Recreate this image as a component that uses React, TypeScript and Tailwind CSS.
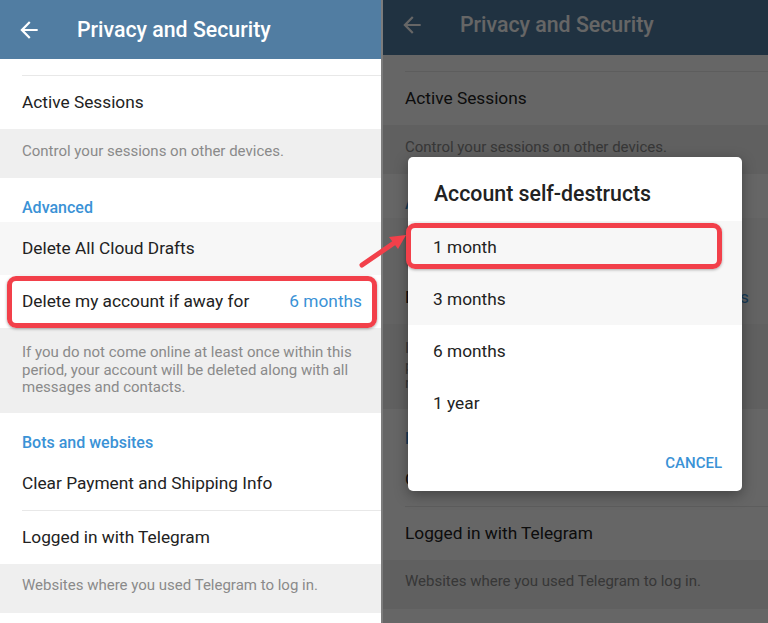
import React from 'react';

const BackArrow = () => (
  <svg width="26" height="26" viewBox="0 0 24 24" className="ml-[16px] shrink-0" fill="#ffffff">
    <path d="M20 11H7.83l5.59-5.59L12 4l-8 8 8 8 1.41-1.41L7.83 13H20v-2z" />
  </svg>
);

const Row = ({ children, className = '' }: { children: React.ReactNode; className?: string }) => (
  <div className={`relative h-[53px] shrink-0 flex items-center justify-between pl-[22px] pr-[19px] pt-[1px] text-[17.3px] text-[#222222] ${className}`}>
    {children}
  </div>
);

const Info = ({ children, className = '' }: { children: React.ReactNode; className?: string }) => (
  <div className={`shrink-0 bg-[#efefef] px-[22px] text-[15px] leading-[17.5px] text-[#8a8a8a] ${className}`}>{children}</div>
);

const SectionTitle = ({ children }: { children: React.ReactNode }) => (
  <div className="h-[44px] shrink-0 pt-[21px] px-[22px] text-[16px] leading-[18px] font-medium text-[#3a92d6]">{children}</div>
);

const Screen = ({ headerClass, marked }: { headerClass: string; marked?: boolean }) => (
  <div className="flex flex-col bg-white h-[623px]">
    <div className={`${headerClass} shrink-0 flex items-center bg-[#517da2]`}>
      <BackArrow />
      <span className="ml-[35px] text-[21.3px] font-medium text-white">Privacy and Security</span>
    </div>
    <div className="h-[17px] ml-[22px] border-b border-[#e8e8e8] shrink-0" />
    <Row>Active Sessions</Row>
    <Info className="h-[49px] pt-[14px]">Control your sessions on other devices.</Info>
    <SectionTitle>Advanced</SectionTitle>
    <Row className="bg-[#f7f7f7]">Delete All Cloud Drafts</Row>
    <Row className={marked ? 'bg-white' : 'bg-[#f7f7f7]'}>
      <span>Delete my account if away for</span>
      <span className="text-[#3a92d6]">6 months</span>
      {marked && (
        <div className="absolute left-[7px] top-[1px] w-[370px] h-[52px] rounded-[9px] border-[5px] border-[#f2404a] shadow-[0_1px_3px_rgba(0,0,0,0.35)]" />
      )}
    </Row>
    <Info className="h-[85px] pt-[16px]">
      If you do not come online at least once within this period, your account will be deleted along with all
      messages and contacts.
    </Info>
    <SectionTitle>Bots and websites</SectionTitle>
    <Row>Clear Payment and Shipping Info</Row>
    <div className="ml-[22px] border-b border-[#e8e8e8] shrink-0" />
    <Row>Logged in with Telegram</Row>
    <Info className="h-[49px] pt-[13px]">Websites where you used Telegram to log in.</Info>
    <div className="flex-1 bg-white" />
  </div>
);

const options = ['1 month', '3 months', '6 months', '1 year'];

const Dialog = () => (
  <div className="absolute left-[25px] top-[157px] w-[334px] h-[334px] rounded-[5px] bg-white shadow-[0_4px_14px_rgba(0,0,0,0.35)] flex flex-col">
    <div className="h-[64px] pt-[24px] px-[26px] text-[21.3px] leading-[25px] font-medium text-[#222222]">
      Account self-destructs
    </div>
    {options.map((o, i) => (
      <div
        key={o}
        className={`relative h-[52px] flex items-center px-[25px] pt-[1px] text-[17.3px] text-[#222222] ${i < 2 ? 'bg-[#f7f7f7]' : ''}`}
      >
        {o}
        {i === 0 && (
          <div className="absolute left-[-2px] top-[2px] w-[316px] h-[46px] rounded-[9px] border-[5px] border-[#f2404a] shadow-[0_1px_3px_rgba(0,0,0,0.3)]" />
        )}
      </div>
    ))}
    <div className="flex-1 flex items-center justify-end pr-[20px] pt-[7px] text-[15px] font-medium text-[#3a92d6]">
      CANCEL
    </div>
  </div>
);

export default function App() {
  return (
    <div className="relative flex w-[768px] h-[623px] overflow-hidden bg-white font-[Roboto,sans-serif]">
      <div className="w-[381px] shrink-0 overflow-hidden">
        <Screen headerClass="h-[59px]" marked />
      </div>
      <div className="w-[2px] shrink-0 bg-[#7c7c7c]" />
      <div className="relative flex-1 overflow-hidden">
        <Screen headerClass="h-[55px] pb-[5px]" />
        <div className="absolute inset-0 bg-black/60" />
        <Dialog />
      </div>
      <svg className="absolute inset-0 pointer-events-none" width="768" height="623">
        <line x1="362" y1="265" x2="394" y2="243" stroke="#f2404a" strokeWidth="5" strokeLinecap="round" />
        <polygon points="406,235 398,249 389,237" fill="#f2404a" />
      </svg>
    </div>
  );
}
